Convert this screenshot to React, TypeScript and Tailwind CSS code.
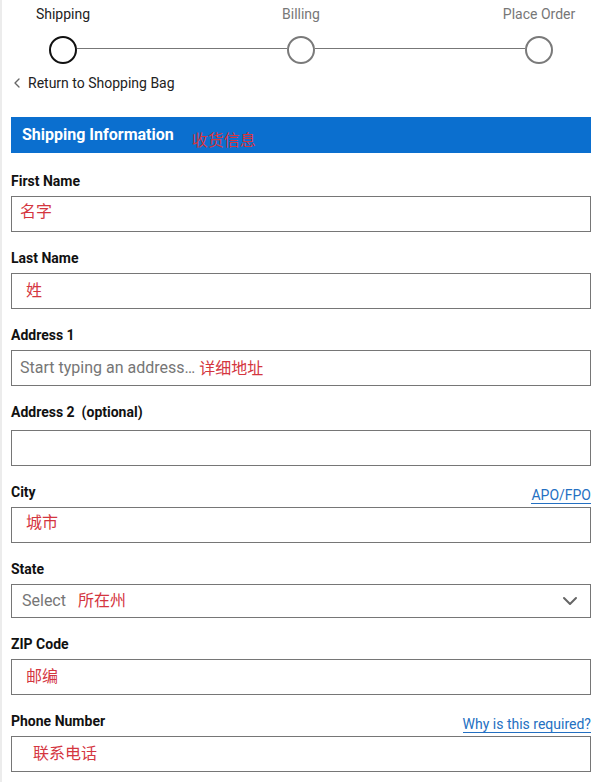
import React from "react";
import { ChevronDown, ChevronLeft } from "lucide-react";

const font = { fontFamily: "Roboto, 'Noto Sans CJK SC', sans-serif" };

const Note = ({ children, className = "" }: { children: React.ReactNode; className?: string }) => (
  <span className={`text-[16px] text-[#d4363f] leading-none ${className}`}>{children}</span>
);

const Field = ({
  label,
  link,
  gap = "mt-[5px]",
  top = "mt-[16px]",
  children,
  height = "h-[36px]",
  className = "",
}: {
  label: React.ReactNode;
  link?: string;
  gap?: string;
  top?: string;
  children?: React.ReactNode;
  height?: string;
  className?: string;
}) => (
  <div className={top}>
    <div className="flex items-center justify-between h-5">
      <span className="text-[14px] font-bold text-[#111] leading-5">{label}</span>
      {link && (
        <span className="text-[14px] text-[#2470c2] leading-4 border-b border-[#2470c2] mt-[6px]">
          {link}
        </span>
      )}
    </div>
    <div
      className={`${gap} ${height} border border-[#767676] bg-white flex items-center ${className}`}
    >
      {children}
    </div>
  </div>
);

export default function App() {
  return (
    <div className="min-h-[782px] bg-white border-l-2 border-[#ececec] pl-[9px] pr-[9px]" style={font}>
      {/* STEPPER */}
      <div className="pt-[4px] px-[38px]">
        <div className="flex justify-between h-5 text-[14px] leading-5">
          <div className="w-7 flex justify-center whitespace-nowrap text-[#222]">Shipping</div>
          <div className="w-7 flex justify-center whitespace-nowrap text-[#777]">Billing</div>
          <div className="w-7 flex justify-center whitespace-nowrap text-[#777]">Place Order</div>
        </div>
        <div className="flex items-center mt-[12px]">
          <div className="w-7 h-7 rounded-full border-2 border-[#111] shrink-0" />
          <div className="flex-1 h-px bg-[#777] -mt-[3px]" />
          <div className="w-7 h-7 rounded-full border-2 border-[#7a7a7a] shrink-0" />
          <div className="flex-1 h-px bg-[#777] -mt-[3px]" />
          <div className="w-7 h-7 rounded-full border-2 border-[#7a7a7a] shrink-0" />
        </div>
      </div>

      {/* BACK LINK */}
      <div className="flex items-center h-5 mt-[9px] text-[14px] text-[#222]">
        <ChevronLeft size={16} strokeWidth={2} className="text-[#666] -ml-[2px]" />
        <span className="ml-[3px]">Return to Shopping Bag</span>
      </div>

      {/* HEADER */}
      <div className="mt-[24px] h-[36px] bg-[#0b6fcf] flex items-center px-[11px]">
        <span className="text-[16px] font-bold text-white">Shipping Information</span>
        <Note className="ml-[18px] mt-[12px]">收货信息</Note>
      </div>

      {/* FORM */}
      <Field label="First Name" top="mt-[18px]" className="pl-[8px]">
        <Note className="-mt-[4px]">名字</Note>
      </Field>
      <Field label="Last Name" className="pl-[14px]">
        <Note>姓</Note>
      </Field>
      <Field label="Address 1" className="pl-[8px]">
        <span className="text-[16px] text-[#767676]">Start typing an address…</span>
        <Note className="ml-[4px] mt-[2px]">详细地址</Note>
      </Field>
      <Field label={<>Address 2&nbsp; (optional)</>} gap="mt-[8px]" />
      <Field label="City" link="APO/FPO" className="pl-[14px]">
        <Note className="-mt-[4px]">城市</Note>
      </Field>
      <Field label="State" height="h-[34px]" className="pl-[10px] pr-[8px] justify-between">
        <span className="flex items-center">
          <span className="text-[16px] text-[#767676]">Select</span>
          <Note className="ml-[12px]">所在州</Note>
        </span>
        <ChevronDown size={24} strokeWidth={2} className="text-[#666]" />
      </Field>
      <Field label="ZIP Code" className="pl-[14px]">
        <Note>邮编</Note>
      </Field>
      <Field label="Phone Number" link="Why is this required?" className="pl-[21px]">
        <Note>联系电话</Note>
      </Field>
    </div>
  );
}
